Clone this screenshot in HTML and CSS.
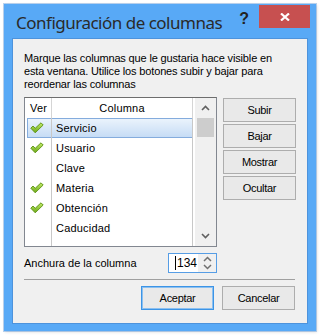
FILE: index.html
```html
<!DOCTYPE html>
<html lang="es">
<head>
    <meta charset="UTF-8">
    <title>Configuración de columnas</title>
    <link rel="stylesheet" href="styles.css">
</head>
<body>

    <div class="window">
        <div class="titlebar">
            <span class="title">Configuración de columnas</span>
            <span class="help">?</span>
            <span class="close">
                <svg width="10" height="8" viewBox="0 0 10 8"><path d="M1 0.5 L9 7.5 M9 0.5 L1 7.5" stroke="#fff" stroke-width="2.2"/></svg>
            </span>
        </div>

        <div class="client">
            <p class="intro">Marque las columnas que le gustaria hace visible en<br>esta ventana. Utilice los botones subir y bajar para<br>reordenar las columnas</p>

            <div class="main">
                <div class="list">
                    <div class="list-body">
                        <div class="row head">
                            <span class="cell ver">Ver</span>
                            <span class="cell name center">Columna</span>
                        </div>
                        <div class="row selected">
                            <span class="cell ver"><svg class="check"><use href="#check"/></svg></span>
                            <span class="cell name">Servicio</span>
                        </div>
                        <div class="row">
                            <span class="cell ver"><svg class="check"><use href="#check"/></svg></span>
                            <span class="cell name">Usuario</span>
                        </div>
                        <div class="row">
                            <span class="cell ver"></span>
                            <span class="cell name">Clave</span>
                        </div>
                        <div class="row">
                            <span class="cell ver"><svg class="check"><use href="#check"/></svg></span>
                            <span class="cell name">Materia</span>
                        </div>
                        <div class="row">
                            <span class="cell ver"><svg class="check"><use href="#check"/></svg></span>
                            <span class="cell name">Obtención</span>
                        </div>
                        <div class="row">
                            <span class="cell ver"></span>
                            <span class="cell name">Caducidad</span>
                        </div>
                        <div class="row filler">
                            <span class="cell ver"></span>
                            <span class="cell name"></span>
                        </div>
                    </div>
                    <div class="scrollbar">
                        <svg class="arrow" width="9" height="6" viewBox="0 0 9 6"><path d="M1 5 L4.5 1.5 L8 5" fill="none" stroke="#606060" stroke-width="1.6"/></svg>
                        <div class="thumb"></div>
                        <div class="track"></div>
                        <svg class="arrow" width="9" height="6" viewBox="0 0 9 6"><path d="M1 1 L4.5 4.5 L8 1" fill="none" stroke="#606060" stroke-width="1.6"/></svg>
                    </div>
                </div>

                <div class="side-buttons">
                    <button>Subir</button>
                    <button>Bajar</button>
                    <button>Mostrar</button>
                    <button>Ocultar</button>
                </div>
            </div>

            <div class="width-row">
                <span class="label">Anchura de la columna</span>
                <div class="spin">
                    <span class="value"><span class="caret"></span>134</span>
                    <span class="spin-arrows">
                        <svg width="9" height="6" viewBox="0 0 9 6"><path d="M1 5 L4.5 1.5 L8 5" fill="none" stroke="#707070" stroke-width="1.5"/></svg>
                        <svg width="9" height="6" viewBox="0 0 9 6"><path d="M1 1 L4.5 4.5 L8 1" fill="none" stroke="#707070" stroke-width="1.5"/></svg>
                    </span>
                </div>
            </div>

            <div class="separator"></div>

            <div class="footer">
                <button class="default">Aceptar</button>
                <button>Cancelar</button>
            </div>
        </div>
    </div>

    <!-- shared check mark -->
    <svg width="0" height="0" style="position:absolute">
        <defs>
            <linearGradient id="green" x1="0" y1="0" x2="0" y2="1">
                <stop offset="0" stop-color="#c4ec6a"/>
                <stop offset="1" stop-color="#6aa816"/>
            </linearGradient>
            <symbol id="check" viewBox="0 0 14 12">
                <path d="M0.8 6.2 L3 4 L5.2 6.3 L11 0.8 L13.2 3 L5.2 10.8 Z" fill="url(#green)" stroke="#5b9114" stroke-width="0.9" stroke-linejoin="round"/>
            </symbol>
        </defs>
    </svg>

</body>
</html>
```

FILE: styles.css
```css
/* Page */
body {
    margin: 0;
    background: #fff;
    font-family: 'Liberation Sans', Arial, sans-serif;
    font-size: 11px;
    color: #000;
}

/* Window frame */
.window {
    margin: 4px;
    width: 312px;
    height: 327px;
    background: #58a9f6;
    box-shadow: 0 0 0 1px rgba(60, 130, 210, 0.35), 1px 1px 3px rgba(0, 0, 0, 0.15);
    display: flex;
    flex-direction: column;
}

.titlebar {
    height: 34px;
    display: flex;
    align-items: flex-start;
    padding-left: 12px;
}

.title {
    font-family: 'Noto Sans', 'Open Sans', sans-serif;
    font-size: 17px;
    letter-spacing: -0.5px;
    color: #2a2a2a;
    line-height: 24px;
    margin-top: 7px;
    white-space: nowrap;
    flex: 1;
    min-width: 0;
}

.help {
    font-family: 'Liberation Sans', sans-serif;
    font-weight: bold;
    font-size: 16px;
    color: #222;
    line-height: 18px;
    margin-top: 6px;
    margin-right: 10px;
}

.close {
    width: 51px;
    height: 23px;
    margin-top: 1px;
    margin-right: 6px;
    background: #c75050;
    display: flex;
    align-items: center;
    justify-content: center;
}

/* Client area */
.client {
    margin: 0 8px;
    height: 286px;
    background: #f0f0f0;
    border: 1px solid #4d93dc;
    padding: 13px 12px 0 11px;
    box-sizing: border-box;
}

.intro {
    margin: 0;
    line-height: 13px;
    letter-spacing: -0.15px;
}

.main {
    display: flex;
    gap: 6px;
    margin-top: 6px;
}

/* List view */
.list {
    width: 193px;
    height: 150px;
    box-sizing: border-box;
    border: 1px solid #828790;
    border-top-color: #6d6d6d;
    background: #fff;
    display: flex;
}

.list-body {
    width: 170px;
    overflow: hidden;
}

.row {
    height: 20px;
    display: flex;
    position: relative;
}

.cell {
    line-height: 20px;
    position: relative;
    z-index: 1;
    box-sizing: border-box;
    border-right: 1px solid #c8c8c8;
    letter-spacing: 0.2px;
}

.cell.ver {
    width: 27px;
    padding-left: 5px;
    display: flex;
    align-items: center;
}

.cell.name {
    width: 141px;
    padding-left: 4px;
}

.cell.center {
    text-align: center;
    padding-left: 0;
}

.row.head .cell {
    border-right-color: #d5d5d5;
}

.row.filler {
    height: 10px;
}

.row.selected::before {
    content: "";
    position: absolute;
    left: 2px;
    top: 0;
    width: 166px;
    height: 20px;
    box-sizing: border-box;
    border: 1px solid #84acdd;
    background: linear-gradient(#eaf3fc, #c6dcf5);
}

.check {
    width: 14px;
    height: 12px;
}

.scrollbar {
    width: 21px;
    background: #f0f0f0;
    display: flex;
    flex-direction: column;
    align-items: center;
}

.scrollbar .arrow {
    margin: 7px 0 7px;
}

.thumb {
    width: 17px;
    height: 19px;
    background: #cdcdcd;
}

.track {
    flex: 1;
}

/* Buttons */
button {
    font-family: 'Liberation Sans', Arial, sans-serif;
    font-size: 11px;
    letter-spacing: -0.3px;
    color: #000;
    width: 73px;
    height: 24px;
    padding: 0;
    background: #e9e9e9;
    border: 1px solid #adadad;
}

button.default {
    border-color: #3c94e6;
    box-shadow: inset 0 0 0 1px #8cc0f0;
}

.side-buttons {
    display: flex;
    flex-direction: column;
    gap: 2px;
    padding-top: 1px;
}

/* Column width */
.width-row {
    display: flex;
    align-items: center;
    margin-top: 6px;
}

.label {
    width: 144px;
}

.spin {
    width: 49px;
    height: 20px;
    box-sizing: border-box;
    border: 1px solid #569de5;
    background: #fff;
    display: flex;
    align-items: center;
}

.value {
    flex: 1;
    padding-left: 6px;
    display: flex;
    align-items: center;
    font-size: 12px;
}

.caret {
    width: 1px;
    height: 14px;
    background: #000;
    margin-right: 1px;
}

.spin-arrows {
    width: 18px;
    height: 18px;
    background: #f0f0f0;
    display: flex;
    flex-direction: column;
    align-items: center;
    justify-content: center;
    gap: 2px;
}

.separator {
    height: 1px;
    background: #a0a0a0;
    margin-top: 6px;
}

.footer {
    display: flex;
    justify-content: flex-end;
    gap: 8px;
    margin-top: 6px;
}
```
